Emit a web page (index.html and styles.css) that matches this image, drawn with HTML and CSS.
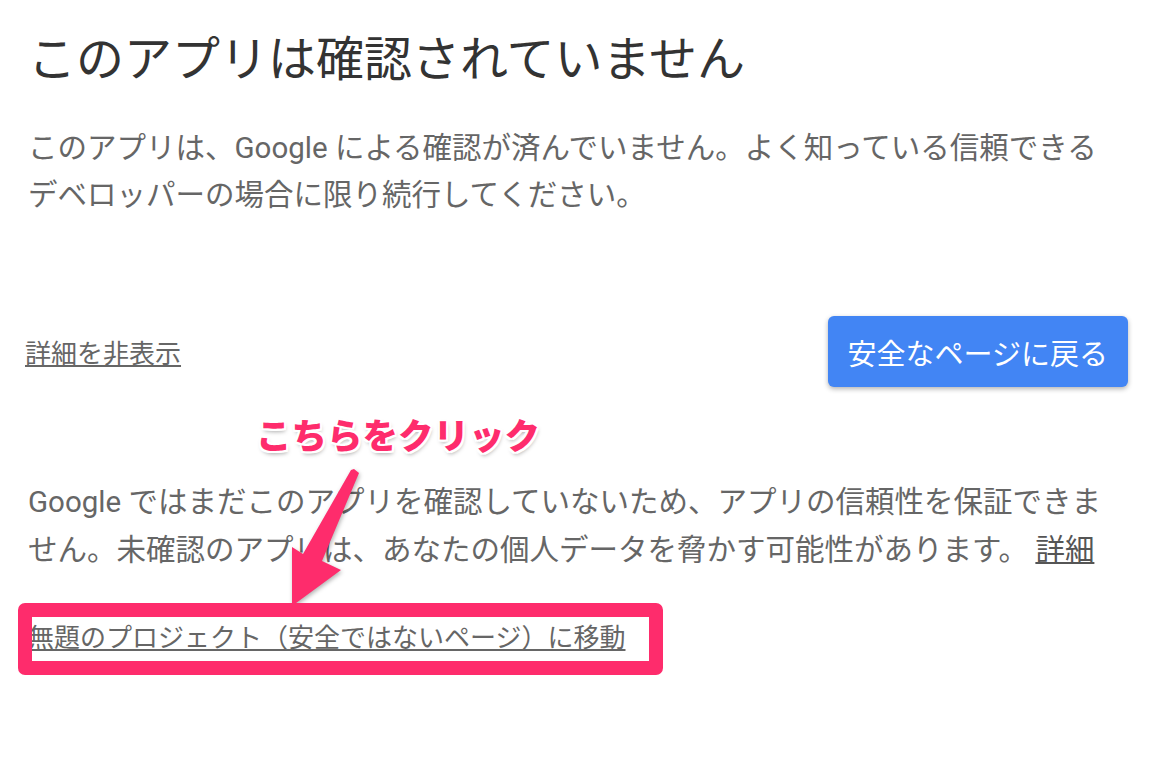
FILE: index.html
```html
<!DOCTYPE html>
<html lang="ja">

<head>
	<meta charset="utf-8">
	<link rel="stylesheet" href="styles.css">
</head>

<body>
	<div class="page">
		<h1>このアプリは確認されていません</h1>
		<p class="lead">このアプリは、Google による確認が済んでいません。よく知っている信頼できるデベロッパーの場合に限り続行してください。</p>

		<div class="actions">
			<a href="#" class="toggle-link">詳細を非表示</a>
			<button type="button" class="back-btn">安全なページに戻る</button>
		</div>

		<p class="details">Google ではまだこのアプリを確認していないため、アプリの信頼性を保証できません。未確認のアプリは、あなたの個人データを脅かす可能性があります。 <a href="#">詳細</a></p>

		<div class="proceed">
			<a href="#">無題のプロジェクト（安全ではないページ）に移動</a>
		</div>

		<!-- Annotation overlay -->
		<div class="note-label">こちらをクリック</div>
		<svg class="note-arrow" width="90" height="150" viewBox="0 0 90 150">
			<polygon points="63,0 68,4 31,92 50,101 1,137 1,78 12,85 60,1" />
		</svg>
		<div class="note-box"></div>
	</div>
</body>

</html>
```

FILE: styles.css
```css
* {
	box-sizing: border-box;
	margin: 0;
	padding: 0;
}

body {
	background: white;
	font-family: Roboto, 'Noto Sans CJK JP', sans-serif;
}

.page {
	position: relative;
	width: 1128px;
	padding: 32px 0 0 28px;
	height: 774px;
}

h1 {
	font-size: 48px;
	font-weight: 400;
	line-height: 56px;
	color: #333;
}

.lead {
	width: 1085px;
	margin-top: 37px;
	font-size: 29.5px;
	line-height: 47px;
	color: #666;
}

.actions {
	display: flex;
	justify-content: space-between;
	align-items: center;
	margin-top: 97px;
}

.toggle-link {
	font-size: 26px;
	color: #666;
	text-decoration: underline;
	margin-left: -3px;
}

.back-btn {
	height: 71px;
	padding: 0 20px;
	background: #4285f4;
	color: white;
	border: none;
	border-radius: 6px;
	font-family: inherit;
	font-size: 29px;
	box-shadow: 0 2px 5px rgba(0, 0, 0, 0.3);
	cursor: pointer;
}

.details {
	width: 1085px;
	margin-top: 91px;
	font-size: 29.5px;
	line-height: 48px;
	color: #666;
}

.details a {
	color: #555;
}

.proceed {
	margin-top: 44px;
	line-height: 40px;
}

.proceed a {
	font-size: 26px;
	color: #666;
}

/* Annotation */
.note-label {
	position: absolute;
	left: 256px;
	top: 409px;
	font-family: 'Noto Sans CJK JP', sans-serif;
	font-size: 35.5px;
	font-weight: 900;
	line-height: 50px;
	color: #fe2c6c;
	text-shadow:
		2px 0 0 #fff, -2px 0 0 #fff, 0 2px 0 #fff, 0 -2px 0 #fff,
		2px 2px 0 #fff, -2px -2px 0 #fff, 2px -2px 0 #fff, -2px 2px 0 #fff,
		1px 3px 4px rgba(0, 0, 0, 0.35);
}

.note-arrow {
	position: absolute;
	left: 291px;
	top: 469px;
	overflow: visible;
	filter: drop-shadow(1px 2px 2px rgba(0, 0, 0, 0.3));
}

.note-arrow polygon {
	fill: #fe2c6c;
}

.note-box {
	position: absolute;
	left: 18px;
	top: 603px;
	width: 645px;
	height: 72px;
	border: 14px solid #fe2c6c;
	border-radius: 7px;
}
```
